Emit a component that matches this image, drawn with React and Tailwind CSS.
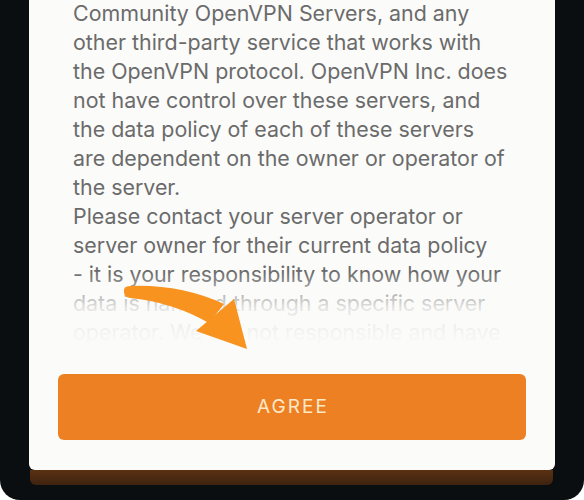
import React from "react";

const lines = [
  "Community OpenVPN Servers, and any",
  "other third-party service that works with",
  "the OpenVPN protocol. OpenVPN Inc. does",
  "not have control over these servers, and",
  "the data policy of each of these servers",
  "are dependent on the owner or operator of",
  "the server.",
  "Please contact your server operator or",
  "server owner for their current data policy",
  "- it is your responsibility to know how your",
  "data is handled through a specific server",
  "operator. We are not responsible and have",
];

export default function App() {
  return (
    <div className="relative w-[584px] h-[500px] bg-white overflow-hidden" style={{ fontFamily: "Inter, 'Noto Sans', sans-serif" }}>
      <div className="w-[584px] h-[500px] bg-[#0b0e10] rounded-b-[20px] pl-[29px] flex flex-col">
        <div className="w-[526px] h-[470px] bg-[#fbfbfa] rounded-b-[6px] flex flex-col">
          <div className="relative h-[346px] overflow-hidden pl-[44px] pr-[10px]">
            <div className="mt-[-1px] text-[21.4px] leading-[29px] text-[#6b6b6b] whitespace-nowrap">
              {lines.map((l, i) => (
                <div key={i}>{l}</div>
              ))}
            </div>
            <div className="absolute left-0 right-0 bottom-0 h-[74px] bg-gradient-to-b from-[#fbfbfa]/0 via-[#fbfbfa]/85 to-[#fbfbfa]" />
          </div>
          <div className="mt-[28px] mx-[29px] h-[66px] rounded-[6px] bg-[#ec8023] flex items-center justify-center">
            <span className="text-[19px] tracking-[0.11em] text-[#fde8c9] pl-[2px]">AGREE</span>
          </div>
        </div>
        <div className="ml-[1px] w-[523px] h-[15px] rounded-b-[6px] bg-gradient-to-b from-[#5a3113] to-[#3e230f]" />
      </div>
      <svg className="absolute left-0 top-0" width="584" height="500" viewBox="0 0 584 500">
        <path
          d="M124 292 Q123 286 130 286 Q180 284 224 304 L209 323 Q172 302 130 298 Q124 297 124 292 Z"
          fill="#f7931e"
        />
        <polygon points="196,331 234,299 247,349" fill="#f7931e" />
      </svg>
    </div>
  );
}
